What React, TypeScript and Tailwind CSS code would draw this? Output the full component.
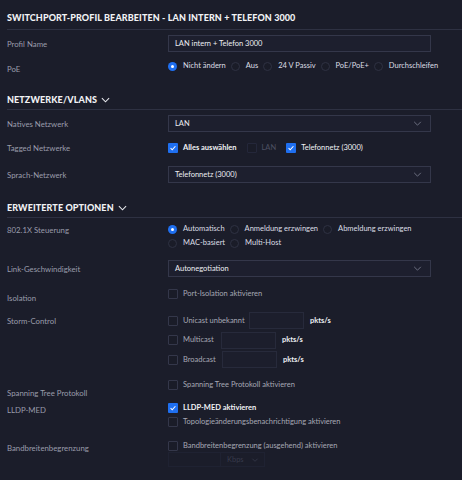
import type { ReactNode } from "react";

const font = { fontFamily: "Lato, 'Noto Sans', sans-serif" };

const Chevron = ({ className = "" }: { className?: string }) => (
  <svg viewBox="0 0 10 6" className={className} fill="none" stroke="currentColor" strokeWidth="1.2">
    <path d="M1 1l4 4 4-4" />
  </svg>
);

const SectionTitle = ({ children, chevron = false, className = "" }: { children: ReactNode; chevron?: boolean; className?: string }) => (
  <div className={`flex items-center gap-[4px] border-b border-[#2e3142] pb-[4px] text-[9px] font-black uppercase leading-[11px] tracking-[0.1px] text-[#f1f2f5] ${className}`}>
    <span>{children}</span>
    {chevron ? <Chevron className="h-[6px] w-[9px] text-[#e6e7ec]" /> : null}
  </div>
);

const Label = ({ children, className = "" }: { children: ReactNode; className?: string }) => (
  <div className={`w-[161px] shrink-0 text-[7.8px] leading-[10px] text-[#9a9caa] ${className}`}>{children}</div>
);

const Select = ({ value }: { value: string }) => (
  <div className="flex h-[17px] w-[263px] items-center justify-between border border-[#34374a] bg-[#1d1f2e] pl-[6px] pr-[8px] text-[7.5px] text-[#eceef3]">
    <span>{value}</span>
    <Chevron className="h-[5px] w-[9px] text-[#6c6f80]" />
  </div>
);

const Radio = ({ label, checked = false }: { label: string; checked?: boolean }) => (
  <div className="flex items-center gap-[6px]">
    {checked ? (
      <span className="flex h-[9px] w-[9px] items-center justify-center rounded-full bg-[#1f6ff0]">
        <span className="h-[3px] w-[3px] rounded-full bg-white" />
      </span>
    ) : (
      <span className="h-[9px] w-[9px] rounded-full border border-[#2f3243] bg-[#1a1c28]" />
    )}
    <span className="text-[7.5px] leading-[10px] text-[#dcdee5]">{label}</span>
  </div>
);

const Check = ({ label, checked = false, tone = "dim", bold = false }: { label: string; checked?: boolean; tone?: "bright" | "dim" | "off"; bold?: boolean }) => {
  const color = tone === "bright" ? "text-[#f1f2f5]" : tone === "off" ? "text-[#4d5062]" : "text-[#a6a8b4]";
  return (
    <div className="flex items-center gap-[5px]">
      {checked ? (
        <span className="flex h-[10px] w-[10px] items-center justify-center rounded-[1px] bg-[#1f6ff0]">
          <svg viewBox="0 0 10 10" className="h-[8px] w-[8px]" fill="none" stroke="white" strokeWidth="1.3">
            <path d="M2 5.2l2 2 4-4.4" />
          </svg>
        </span>
      ) : (
        <span className={`h-[10px] w-[10px] rounded-[1px] border ${tone === "off" ? "border-[#24273a]" : "border-[#34374a]"} bg-[#1a1c28]`} />
      )}
      <span className={`text-[7.5px] leading-[10px] ${color} ${bold ? "font-bold" : ""}`}>{label}</span>
    </div>
  );
};

const Storm = ({ label, labelW, inputGap }: { label: string; labelW: string; inputGap: string }) => (
  <div className="flex h-[17px] items-center">
    <span className="h-[10px] w-[10px] rounded-[1px] border border-[#34374a] bg-[#1a1c28]" />
    <span className={`ml-[5px] text-[7.5px] text-[#a6a8b4] ${labelW}`}>{label}</span>
    <span className={`h-[17px] w-[55px] border border-[#272a3b] bg-[#1c1e2c] ${inputGap}`} />
    <span className="ml-[6px] text-[7.5px] font-bold text-[#eceef3]">pkts/s</span>
  </div>
);

export default function App() {
  return (
    <div className="h-[480px] w-[462px] overflow-hidden bg-[#1b1d2a] pl-[7px]" style={font}>
      <SectionTitle className="pt-[12px] pb-[6px]">SWITCHPORT-PROFIL BEARBEITEN - LAN INTERN + TELEFON 3000</SectionTitle>

      <div className="mt-[5px] flex items-center">
        <Label>Profil Name</Label>
        <div className="flex h-[17px] w-[263px] items-center border border-[#34374a] bg-[#1d1f2e] pl-[6px] text-[7.5px] text-[#eceef3]">
          LAN intern + Telefon 3000
        </div>
      </div>

      <div className="mt-[9px] flex h-[10px] items-start">
        <Label className="mt-[3px]">PoE</Label>
        <div className="flex h-[10px] items-center gap-[5px]">
          <Radio label="Nicht ändern" checked />
          <Radio label="Aus" />
          <Radio label="24 V Passiv" />
          <Radio label="PoE/PoE+" />
          <Radio label="Durchschleifen" />
        </div>
      </div>

      <SectionTitle chevron className="mt-[23px]">NETZWERKE/VLANS</SectionTitle>

      <div className="mt-[5px] flex items-center">
        <Label>Natives Netzwerk</Label>
        <Select value="LAN" />
      </div>

      <div className="mt-[11px] flex items-center">
        <Label>Tagged Netzwerke</Label>
        <div className="flex items-center gap-[10px]">
          <Check label="Alles auswählen" checked tone="bright" bold />
          <Check label="LAN" tone="off" />
          <Check label="Telefonnetz (3000)" checked tone="bright" />
        </div>
      </div>

      <div className="mt-[13px] flex items-center">
        <Label>Sprach-Netzwerk</Label>
        <Select value="Telefonnetz (3000)" />
      </div>

      <SectionTitle chevron className="mt-[19px]">ERWEITERTE OPTIONEN</SectionTitle>

      <div className="mt-[6px] flex items-start">
        <Label className="mt-[1px]">802.1X Steuerung</Label>
        <div className="flex w-[263px] flex-wrap items-center gap-x-[5px] gap-y-[4px]">
          <Radio label="Automatisch" checked />
          <Radio label="Anmeldung erzwingen" />
          <Radio label="Abmeldung erzwingen" />
          <Radio label="MAC-basiert" />
          <Radio label="Multi-Host" />
        </div>
      </div>

      <div className="mt-[12px] flex items-center">
        <Label>Link-Geschwindigkeit</Label>
        <Select value="Autonegotiation" />
      </div>

      <div className="mt-[12px] flex h-[10px] items-start">
        <Label className="mt-[4px]">Isolation</Label>
        <Check label="Port-Isolation aktivieren" />
      </div>

      <div className="mt-[13px] flex items-start">
        <Label className="mt-[4px]">Storm-Control</Label>
        <div className="flex flex-col gap-[2.5px]">
          <Storm label="Unicast unbekannt" labelW="w-[62px]" inputGap="ml-[4px]" />
          <Storm label="Multicast" labelW="w-[33px]" inputGap="ml-[5px]" />
          <Storm label="Broadcast" labelW="w-[34px]" inputGap="ml-[5px]" />
        </div>
      </div>

      <div className="mt-[12px] flex h-[10px] items-start">
        <Label className="mt-[8px]">Spanning Tree Protokoll</Label>
        <Check label="Spanning Tree Protokoll aktivieren" />
      </div>

      <div className="mt-[13px] flex items-start">
        <Label className="mt-[2px]">LLDP-MED</Label>
        <div className="flex flex-col gap-[4px]">
          <Check label="LLDP-MED aktivieren" checked tone="bright" bold />
          <Check label="Topologieänderungsbenachrichtigung aktivieren" />
        </div>
      </div>

      <div className="mt-[14px] flex items-start">
        <Label className="mt-[2px]">Bandbreitenbegrenzung</Label>
        <div className="flex flex-col gap-[1px]">
          <Check label="Bandbreitenbegrenzung (ausgehend) aktivieren" />
          <div className="flex h-[15px] w-[97px] border border-[#222536] opacity-70">
            <span className="w-[52px] border-r border-[#222536]" />
            <div className="flex flex-1 items-center justify-between pl-[6px] pr-[5px] text-[7.5px] text-[#44475a]">
              <span>Kbps</span>
              <Chevron className="h-[4px] w-[8px]" />
            </div>
          </div>
        </div>
      </div>
    </div>
  );
}
